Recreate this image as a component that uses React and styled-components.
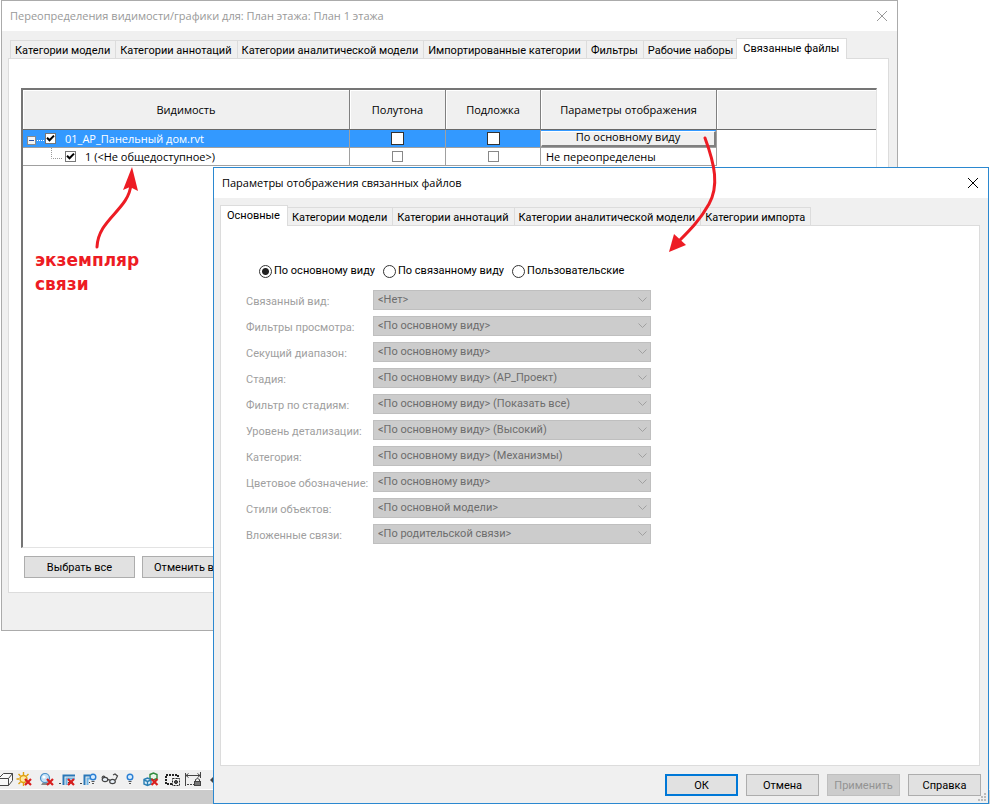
import React from "react";
import styled, { createGlobalStyle } from "styled-components";

const GlobalStyle = createGlobalStyle`
  * {
    box-sizing: border-box;
  }

  body {
    margin: 0;
    background: #fff;
    color: #000;
    font: 11px/14px Roboto, "Liberation Sans", sans-serif;
  }

  button,
  input,
  select {
    font: inherit;
    color: inherit;
    margin: 0;
  }
`;

const Desktop = styled.div`
  position: relative;
  display: flex;
  flex-direction: column;
  min-height: 100vh;
  overflow: hidden;
`;

const Window = styled.section`
  display: flex;
  flex-direction: column;
  background: #f0f0f0;
  border: 1px solid #ababab;
`;

const MainWindow = styled(Window)`
  margin: 0 92px 0 1px;
`;

const Dialog = styled(Window)`
  position: absolute;
  top: 167px;
  right: 1px;
  bottom: 0;
  left: 213px;
  border-color: #2b88d0;
`;

const TitleBar = styled.header`
  display: flex;
  align-items: center;
  justify-content: space-between;
  height: 30px;
  padding: 0 9px 0 8px;
  background: #fff;
  color: ${(p) => (p.$inactive ? "#999" : "#000")};
  font-family: "Open Sans", "Noto Sans", sans-serif;
`;

const Title = styled.h1`
  margin: 0;
  font-size: 11px;
  font-weight: 400;
`;

const CloseButton = styled.button`
  display: flex;
  padding: 0;
  border: 0;
  background: none;
`;

const Body = styled.div`
  display: flex;
  flex-direction: column;
  flex: 1;
  padding: 0 8px 0 6px;
`;

const TabStrip = styled.div`
  display: flex;
  align-items: flex-end;
  height: 27px;
  padding-left: 2px;
`;

const Tab = styled.button`
  height: 18px;
  padding: 2px 5px 0 4px;
  border: solid #dcdcdc;
  border-width: 1px 0 0 1px;
  background: #f0f0f0;
  white-space: nowrap;

  &:last-child {
    border-right-width: 1px;
  }

  &[aria-selected="true"] {
    position: relative;
    height: 21px;
    margin: 0 -1px -1px -2px;
    padding: 0 7px 0 6px;
    border-width: 1px 1px 0;
    background: #fff;
  }
`;

const Panel = styled.div`
  flex: 1;
  border: 1px solid #dcdcdc;
  background: #fff;
`;

const LinksPanel = styled(Panel)`
  padding: 29px 11px 14px 12px;
`;

const FormPanel = styled(Panel)`
  padding: 38px 25px;
`;

const GridBox = styled.div`
  min-height: 460px;
  border: solid;
  border-width: 2px 1px 1px 2px;
  border-color: #757575 #e3e3e3 #e3e3e3 #757575;
`;

const LinksTable = styled.table`
  width: 100%;
  table-layout: fixed;
  border-collapse: separate;
  border-spacing: 0;
  font: 11px/14px "Open Sans", "Noto Sans", sans-serif;
`;

const HeadCell = styled.th`
  width: ${(p) => p.$width};
  height: 40px;
  padding: 0;
  border-bottom: 1px solid #696969;
  border-right: ${(p) => (p.$last ? 0 : "1px solid #808080")};
  box-shadow: inset 1px 1px #fff;
  background: #f0f0f0;
  font-weight: 400;
`;

const Row = styled.tr`
  background: ${(p) => (p.$selected ? "#3399ff" : "#fff")};
  color: ${(p) => (p.$selected ? "#fff" : "#000")};
`;

const Cell = styled.td`
  height: 18px;
  padding: 0;
  border-bottom: 1px solid #a0a0a0;
  border-right: 1px solid #a0a0a0;
  text-align: center;
`;

const TextCell = styled(Cell)`
  padding-left: 5px;
  text-align: left;
`;

const BlankCell = styled.td`
  background: #fff;
`;

const TreeItem = styled.div`
  display: flex;
  align-items: center;
  height: 17px;
  padding-left: ${(p) => (p.$nested ? 27 : 4)}px;
`;

const TreeLabel = styled.label`
  display: flex;
  align-items: center;
  gap: 9px;
  white-space: nowrap;
`;

const CheckFrame = styled.span`
  display: inline-grid;
  vertical-align: top;

  > * {
    grid-area: 1 / 1;
  }

  svg {
    place-self: center;
    pointer-events: none;
  }
`;

const CheckInput = styled.input`
  appearance: none;
  width: ${(p) => p.$size}px;
  height: ${(p) => p.$size}px;
  border: 1px solid ${(p) => p.$line};
  background: #fff;
`;

const CellCheck = styled.div`
  display: flex;
  align-items: center;
  justify-content: center;
  height: 17px;
`;

const ViewButton = styled.button`
  display: block;
  width: 100%;
  height: 16px;
  padding: 0 0 3px;
  border: solid;
  border-width: 1px 2px 2px 1px;
  border-color: #fff #808080 #808080 #fff;
  background: #f0f0f0;
  color: #000;
  line-height: 10px;
`;

const PushButton = styled.button`
  width: ${(p) => p.$width}px;
  height: 22px;
  padding: 1px 0 0;
  border: ${(p) => (p.$primary ? "2px solid #0078d7" : "1px solid #adadad")};
  background: #e1e1e1;

  &:disabled {
    border-color: #bfbfbf;
    background: #ccc;
    color: #939393;
  }
`;

const PanelButtons = styled.div`
  display: flex;
  gap: 7px;
  padding: 8px 0 0 3px;
`;

const Footer = styled.footer`
  display: flex;
  justify-content: flex-end;
  gap: 8px;
  height: 37px;
  padding: 8px 7px 0;
`;

const Radios = styled.div`
  display: flex;
  gap: 8px;
  height: 26px;
  padding-left: 13px;
`;

const RadioLabel = styled.label`
  display: flex;
  align-items: center;
  gap: 2px;
  height: 14px;
  white-space: nowrap;
`;

const RadioInput = styled.input`
  appearance: none;
  width: 13px;
  height: 13px;
  border: 1px solid #333;
  border-radius: 50%;
  background: #fff;

  &:checked {
    background: radial-gradient(circle, #222 3px, #fff 4px);
  }
`;

const Fields = styled.div`
  display: grid;
  grid-template-columns: 127px minmax(160px, 278px);
  grid-auto-rows: 20px;
  row-gap: 6px;
`;

const FieldLabel = styled.label`
  padding-top: 5px;
  color: #a0a0a0;
  white-space: nowrap;
`;

const SelectFrame = styled.span`
  display: grid;

  > * {
    grid-area: 1 / 1;
  }

  svg {
    place-self: center end;
    margin-right: 4px;
    pointer-events: none;
  }
`;

const Select = styled.select`
  appearance: none;
  width: 100%;
  padding: 0 4px;
  border: 1px solid #bfbfbf;
  border-radius: 0;
  background: #ccc;

  &:disabled {
    color: #6d6d6d;
    opacity: 1;
  }
`;

const Grip = styled.svg`
  position: absolute;
  right: 2px;
  bottom: 2px;
`;

const ViewBar = styled.div`
  display: flex;
  align-items: flex-end;
  height: 19px;
  padding-bottom: 1px;
  margin-top: auto;
  margin-left: -6px;
  background: #f0f0f0;
`;

const StatusStrip = styled.div`
  height: 14px;
  margin-top: 1px;
  background: #cbcbcb;
`;

const Arrows = styled.svg`
  position: absolute;
  top: 0;
  left: 0;
  pointer-events: none;
`;

const Note = styled.p`
  position: absolute;
  top: 248px;
  left: 35px;
  margin: 0;
  color: #ed1c24;
  font: bold 17px/24px "DejaVu Sans", sans-serif;
`;

const mainTabs = [
  "Категории модели",
  "Категории аннотаций",
  "Категории аналитической модели",
  "Импортированные категории",
  "Фильтры",
  "Рабочие наборы",
  "Связанные файлы",
];

const dialogTabs = [
  "Основные",
  "Категории модели",
  "Категории аннотаций",
  "Категории аналитической модели",
  "Категории импорта",
];

const fields = [
  ["view", "Связанный вид:", "<Нет>"],
  ["filters", "Фильтры просмотра:", "<По основному виду>"],
  ["range", "Секущий диапазон:", "<По основному виду>"],
  ["phase", "Стадия:", "<По основному виду> (АР_Проект)"],
  ["phaseFilter", "Фильтр по стадиям:", "<По основному виду> (Показать все)"],
  ["detail", "Уровень детализации:", "<По основному виду> (Высокий)"],
  ["category", "Категория:", "<По основному виду> (Механизмы)"],
  ["color", "Цветовое обозначение:", "<По основному виду>"],
  ["styles", "Стили объектов:", "<По основной модели>"],
  ["nested", "Вложенные связи:", "<По родительской связи>"],
];

function Close() {
  return (
    <CloseButton aria-label="Закрыть">
      <svg width="12" height="12" viewBox="0 0 12 12" stroke="currentColor">
        <path d="M1 1 L11 11 M11 1 L1 11" />
      </svg>
    </CloseButton>
  );
}

function Tabs({ items, active }) {
  return (
    <TabStrip role="tablist">
      {items.map((t) => (
        <Tab key={t} role="tab" aria-selected={t === active}>
          {t}
        </Tab>
      ))}
    </TabStrip>
  );
}

function Check({ size = 11, line = "#777", checked, ...rest }) {
  const [on, setOn] = React.useState(!!checked);

  return (
    <CheckFrame>
      <CheckInput
        type="checkbox"
        $size={size}
        $line={line}
        checked={on}
        onChange={() => setOn(!on)}
        {...rest}
      />
      {on && (
        <svg width="9" height="9" viewBox="0 0 9 9" fill="none" stroke="#000" strokeWidth="2">
          <path d="M1 3.8 L3.5 6.3 L8 1.6" />
        </svg>
      )}
    </CheckFrame>
  );
}

function RedCross({ x, y }) {
  return (
    <path
      d={`M${x - 3} ${y - 3} l6 6 m0 -6 l-6 6`}
      stroke="#d81e1e"
      strokeWidth="2.2"
    />
  );
}

function Bulb({ x, y }) {
  return (
    <g>
      <circle cx={x} cy={y} r="2.8" fill="#d8eeff" stroke="#2b7fd4" strokeWidth="1.4" />
      <path d={`M${x - 1.5} ${y + 4.5} h3 M${x - 1} ${y + 6.5} h2`} stroke="#555" />
    </g>
  );
}

function CropFrame() {
  return (
    <g fill="none">
      <path d="M6.5 13 V3.5 H18" stroke="#2a78b8" strokeWidth="2" />
      <path d="M9.5 13 V6.5 H18" stroke="#6fb4e4" strokeWidth="2" />
      <path d="M2 11.5 h3 M11 10.5 h6" stroke="#444" strokeDasharray="2 1" />
      <path d="M12.500 8 V13" stroke="#444" />
    </g>
  );
}

const viewIcons = [
  // visual style
  <g fill="#f8f8f8" stroke="#444">
    <path d="M4.5 6.5 L9.5 1.5 H18.5 V8.5 L14.5 13.5 H4.5 Z" />
    <path d="M4.5 6.5 H14.5 V13.5 M14.5 6.5 L18.5 1.5" fill="none" />
  </g>,
  // sun path
  <g>
    <path
      d="M8.5 0 V3 M8.5 11 V14 M1.5 7 H4 M3.5 2 L5.5 4 M13.5 2 L11.5 4 M3.5 12 L5.5 10"
      stroke="#e0a010"
      strokeWidth="1.4"
    />
    <circle cx="8.5" cy="7" r="3.5" fill="#ffe9a0" stroke="#e0a010" strokeWidth="1.4" />
    <RedCross x={13} y={10} />
  </g>,
  // shadows
  <g>
    <path d="M5 13 H14 L11 10 H7 Z" fill="#888" />
    <circle cx="9" cy="6" r="4.5" fill="#c4e2f8" stroke="#4a90c8" strokeWidth="1.2" />
    <circle cx="8" cy="5" r="1.6" fill="#fff" />
    <RedCross x={14} y={10} />
  </g>,
  <g>
    <CropFrame />
    <RedCross x={14} y={10} />
  </g>,
  <g>
    <CropFrame />
    <path d="M12 0 H20 V13 H12 Z" fill="#f0f0f0" />
    <Bulb x={15} y={5} />
  </g>,
  // temporary hide
  <g fill="#e8f0f8" stroke="#444" strokeWidth="1.2">
    <path d="M3 6 C3.500 3.500 5 4 6 5 M16.500 8 L18.500 4 L16 2 L14 3" fill="none" />
    <ellipse cx="6" cy="7.5" rx="2.8" ry="2.2" />
    <ellipse cx="13.5" cy="9.5" rx="2.8" ry="2.2" />
    <path d="M8.5 8 Q10 7 11 8.5" fill="none" />
  </g>,
  <Bulb x={10} y={5} />,
  // analytical model
  <g strokeWidth="1.4">
    <path d="M9 2.5 L12.5 1 L16 2.5 V6.5 L12.5 8 L9 6.5 Z" fill="#eaf6ea" stroke="#2f8a3c" />
    <path d="M3 7.5 L6.5 6 L10 7.5 V12 L6.5 13.5 L3 12 Z" fill="#dff0fb" stroke="#2b7fb4" />
    <path d="M6.5 9.5 V13 M3 8 L6.5 9.5 L10 8" fill="none" stroke="#2b7fb4" />
    <RedCross x={13.5} y={10} />
  </g>,
  // highlight sets
  <g fill="none" stroke="#222">
    <rect x="4" y="3" width="12" height="9" strokeWidth="2" strokeDasharray="2 1" />
    <rect x="10.5" y="6.5" width="7" height="7" fill="#f0f0f0" strokeDasharray="2 1" />
    <circle cx="14" cy="10" r="1.5" fill="#555" />
  </g>,
  // constraints
  <g fill="none" stroke="#444">
    <path d="M2.5 1 V14 M17.5 0 V6 M3 3.5 H17 M5.5 1.5 L3 3.5 L5.5 5.5 M14.5 1.5 L17 3.5 L14.5 5.5" />
    <path d="M4 12.5 H11" strokeDasharray="2 1" />
    <path d="M12.5 9 V7.5 Q14.5 5.5 16.5 7.5 V9" />
    <rect x="11.5" y="9.5" width="6" height="4" fill="#777" />
  </g>,
  <path d="M6 8 L9 5 V11 Z" fill="#444" />,
];

function TreeLines({ nested }) {
  if (nested) {
    return (
      <svg width="15" height="17" viewBox="0 0 15 17">
        <path d="M1.5 0 V10.5 H13" fill="none" stroke="#999" strokeDasharray="1 1" />
      </svg>
    );
  }
  return (
    <svg width="18" height="17" viewBox="0 0 18 17">
      <rect x="0.5" y="6.5" width="8" height="8" fill="#f4f4f4" stroke="#8a8a8a" />
      <path d="M2 10.5 H7" stroke="#2a4fa0" />
      <path d="M10 10.5 H17" stroke="#fff" strokeDasharray="1 1" />
    </svg>
  );
}

function LinkRow({ name, selected, nested, children }) {
  return (
    <Row $selected={selected}>
      <Cell>
        <TreeItem $nested={nested}>
          <TreeLines nested={nested} />
          <TreeLabel>
            <Check checked />
            {name}
          </TreeLabel>
        </TreeItem>
      </Cell>
      {["Полутона", "Подложка"].map((c) => (
        <Cell key={c}>
          <CellCheck>
            <Check
              size={selected ? 13 : 11}
              line={selected ? "#333" : "#888"}
              aria-label={c}
            />
          </CellCheck>
        </Cell>
      ))}
      {children}
      <BlankCell />
    </Row>
  );
}

function DisplaySettings() {
  const [mode, setMode] = React.useState("По основному виду");

  return (
    <Dialog role="dialog" aria-labelledby="dialog-title">
      <TitleBar>
        <Title id="dialog-title">Параметры отображения связанных файлов</Title>
        <Close />
      </TitleBar>
      <Body>
        <Tabs items={dialogTabs} active="Основные" />
        <FormPanel>
          <Radios role="radiogroup">
            {["По основному виду", "По связанному виду", "Пользовательские"].map((m) => (
              <RadioLabel key={m}>
                <RadioInput
                  type="radio"
                  name="mode"
                  checked={mode === m}
                  onChange={() => setMode(m)}
                />
                {m}
              </RadioLabel>
            ))}
          </Radios>
          <Fields>
            {fields.map(([id, label, value]) => (
              <React.Fragment key={id}>
                <FieldLabel htmlFor={id}>{label}</FieldLabel>
                <SelectFrame>
                  <Select id={id} disabled>
                    <option>{value}</option>
                  </Select>
                  <svg width="9" height="6" viewBox="0 0 9 6" fill="none" stroke="#a0a0a0">
                    <path d="M0.5 0.5 L4.5 4.5 L8.5 0.5" />
                  </svg>
                </SelectFrame>
              </React.Fragment>
            ))}
          </Fields>
        </FormPanel>
      </Body>
      <Footer>
        <PushButton $width={73} $primary>ОК</PushButton>
        <PushButton $width={73}>Отмена</PushButton>
        <PushButton $width={73} disabled>Применить</PushButton>
        <PushButton $width={73}>Справка</PushButton>
      </Footer>
      <Grip width="8" height="8" fill="#bbb">
        <path d="M6 0h2v2h-2z M3 3h2v2h-2z M6 3h2v2h-2z M0 6h2v2h-2z M3 6h2v2h-2z M6 6h2v2h-2z" />
      </Grip>
    </Dialog>
  );
}

function App() {
  return (
    <>
      <GlobalStyle />
      <Desktop>
        <MainWindow>
          <TitleBar $inactive>
            <Title>Переопределения видимости/графики для: План этажа: План 1 этажа</Title>
            <Close />
          </TitleBar>
          <Body>
            <Tabs items={mainTabs} active="Связанные файлы" />
            <LinksPanel>
              <GridBox>
                <LinksTable>
                  <thead>
                    <tr>
                      <HeadCell $width="327px">Видимость</HeadCell>
                      <HeadCell $width="96px">Полутона</HeadCell>
                      <HeadCell $width="95px">Подложка</HeadCell>
                      <HeadCell $width="176px">Параметры отображения</HeadCell>
                      <HeadCell $last />
                    </tr>
                  </thead>
                  <tbody>
                    <LinkRow name="01_АР_Панельный дом.rvt" selected>
                      <Cell>
                        <ViewButton>По основному виду</ViewButton>
                      </Cell>
                    </LinkRow>
                    <LinkRow name="1 (<Не общедоступное>)" nested>
                      <TextCell>Не переопределены</TextCell>
                    </LinkRow>
                  </tbody>
                </LinksTable>
              </GridBox>
              <PanelButtons>
                <PushButton $width={111}>Выбрать все</PushButton>
                <PushButton $width={111}>Отменить выбор</PushButton>
              </PanelButtons>
            </LinksPanel>
          </Body>
          <Footer />
        </MainWindow>

        <ViewBar>
          {viewIcons.map((icon, i) => (
            <svg key={i} width="21" height="16" viewBox="0 0 21 16">
              {icon}
            </svg>
          ))}
        </ViewBar>
        <StatusStrip />

        <DisplaySettings />

        <Note>
          экземпляр
          <br />
          связи
        </Note>
        <Arrows width="720" height="260" fill="none" stroke="#ed1c24" strokeLinecap="round">
          <path d="M97 247 C98 219 129 210 131 184" strokeWidth="3" />
          <path d="M132 167 L138 191 L130 187 L123 190 Z" fill="#ed1c24" stroke="none" />
          <path d="M705 138 C715 165 719 186 709 204 C700 220 690 230 680 240" strokeWidth="3" />
          <path d="M669 252 L674 234 L686 245 Z" fill="#ed1c24" stroke="none" />
        </Arrows>
      </Desktop>
    </>
  );
}

export default App;
